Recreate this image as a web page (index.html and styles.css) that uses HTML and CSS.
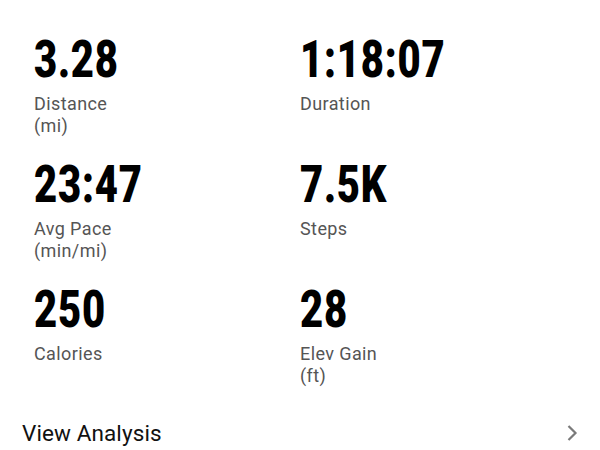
FILE: index.html
```html
<!DOCTYPE html>
<html>
<head>
<meta charset="utf-8">
<link rel="stylesheet" href="styles.css">
</head>
<body>
<div class="page">
  <div class="stats">
    <div class="stat">
      <div class="value"><span>3.28</span></div>
      <div class="label">Distance<br>(mi)</div>
    </div>
    <div class="stat">
      <div class="value"><span>1:18:07</span></div>
      <div class="label">Duration</div>
    </div>
    <div class="stat">
      <div class="value"><span>23:47</span></div>
      <div class="label">Avg Pace<br>(min/mi)</div>
    </div>
    <div class="stat">
      <div class="value"><span>7.5K</span></div>
      <div class="label">Steps</div>
    </div>
    <div class="stat">
      <div class="value"><span>250</span></div>
      <div class="label">Calories</div>
    </div>
    <div class="stat">
      <div class="value"><span>28</span></div>
      <div class="label">Elev Gain<br>(ft)</div>
    </div>
  </div>
  <div class="analysis">
    <span class="analysis-text">View Analysis</span>
    <svg class="chevron" width="12" height="18" viewBox="0 0 12 18"><path d="M2.5 2 L9.5 9 L2.5 16" fill="none" stroke="#7a7a7a" stroke-width="2.2"/></svg>
  </div>
</div>
</body>
</html>
```
FILE: styles.css
```css
html, body {
  margin: 0;
  padding: 0;
  background: #ffffff;
}
.page {
  width: 600px;
  height: 450px;
  overflow: hidden;
  font-family: "Roboto", "Liberation Sans", sans-serif;
}
.stats {
  display: grid;
  grid-template-columns: 266px 1fr;
  row-gap: 22px;
  padding: 34px 0 0 34px;
}
.value {
  height: 52px;
  line-height: 52px;
  font-size: 52px;
  font-weight: 900;
  color: #000;
  white-space: nowrap;
}
.value span {
  display: inline-block;
  transform: scaleX(0.77);
  transform-origin: left center;
  letter-spacing: 1px;
}
.label {
  margin-top: 7px;
  font-size: 18px;
  line-height: 22px;
  letter-spacing: 0.4px;
  color: #555555;
}
.analysis {
  display: flex;
  align-items: center;
  justify-content: space-between;
  padding: 0 22px 0 22px;
  margin-top: 31px;
  height: 30px;
}
.analysis-text {
  font-size: 22.5px;
  letter-spacing: 0.1px;
  color: #111;
}
.chevron {
  display: block;
}
```
